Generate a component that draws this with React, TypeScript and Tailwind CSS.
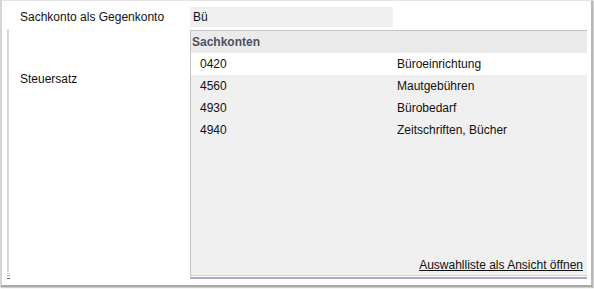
import React from "react";

const rows = [
  { code: "0420", name: "Büroeinrichtung", active: true },
  { code: "4560", name: "Mautgebühren" },
  { code: "4930", name: "Bürobedarf" },
  { code: "4940", name: "Zeitschriften, Bücher" },
];

export default function App() {
  return (
    <div className="w-[594px] h-[289px] bg-white font-['Liberation_Sans',Arial,sans-serif] text-[12px] leading-[14px] text-[#111]">
      <div className="w-[593px] h-[287px] border-l-2 border-l-[#d6d6d6] border-t border-t-[#e4e4e4] border-r-2 border-r-[#b8b8b8] border-b-2 border-b-[#a8a8a8] shadow-[1px_1px_1px_#d0d0d0] flex flex-col pt-[6px]">
        <div className="flex items-center h-[20px]">
          <div className="w-[188px] pl-[18px]">Sachkonto als Gegenkonto</div>
          <div className="w-[203px] h-[20px] bg-[#f0f0f0] pl-[3px] flex items-center">Bü</div>
        </div>
        <div className="flex mt-[3px] h-[249px]">
          <div className="w-[188px] flex">
            <div className="w-[5px]" />
            <div className="flex flex-col items-start">
              <div className="w-[2px] h-[245px] bg-[#dadada] mt-[-1px]" />
              <div className="w-[3px] h-[1px] bg-[#c8c8e0] mt-[1px]" />
              <div className="w-[3px] h-[1px] bg-[#a8a8d8] mt-[1px]" />
              <div className="flex mt-[2px]">
                <div className="w-[1px] h-[1px] bg-[#e03030]" />
                <div className="w-[1px] h-[1px] bg-[#30b030]" />
                <div className="w-[1px] h-[1px] bg-[#3040e0]" />
              </div>
            </div>
            <div className="pl-[10px] pt-[42px]">Steuersatz</div>
          </div>
          <div className="w-[397px] h-[249px] flex flex-col bg-[#f0f0f0] border-t border-l border-[#c4c4c4]">
            <div className="h-[22px] bg-[#ebebeb] pl-[1px] flex items-center font-bold text-[#4a5262]">
              Sachkonten
            </div>
            {rows.map((r) => (
              <div
                key={r.code}
                className={`h-[22px] flex items-center ${r.active ? "bg-white" : ""}`}
              >
                <div className="w-[206px] pl-[9px]">{r.code}</div>
                <div>{r.name}</div>
              </div>
            ))}
            <div className="flex-1" />
            <div className="flex justify-end pr-[4px] pb-[3px]">
              <span className="underline underline-offset-[1px]">Auswahlliste als Ansicht öffnen</span>
            </div>
            <div className="h-[1px] bg-[#cfcfe4]" />
            <div className="h-[1px] bg-white" />
            <div className="h-[2px] bg-[#a8a8d8]" />
          </div>
        </div>
      </div>
    </div>
  );
}
